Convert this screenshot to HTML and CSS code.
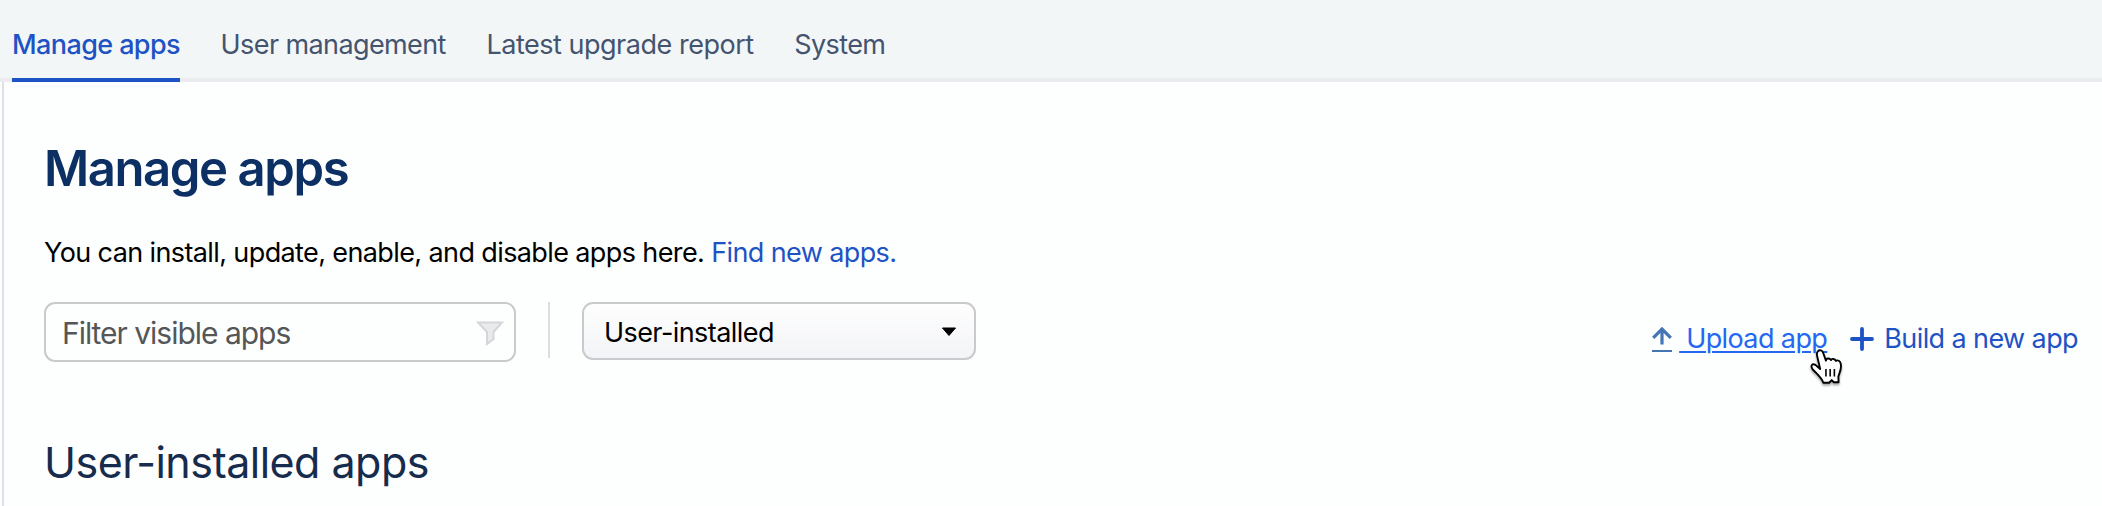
FILE: index.html
```html
<!DOCTYPE html>
<html lang="en">
<head>
<meta charset="utf-8">
<title>Manage apps</title>
<link rel="stylesheet" href="styles.css">
</head>
<body>
<nav class="tabs">
  <a class="tab tab-active">Manage apps</a>
  <a class="tab">User management</a>
  <a class="tab tab-report">Latest upgrade report</a>
  <a class="tab">System</a>
</nav>
<main class="panel">
  <h1 class="title">Manage apps</h1>
  <p class="intro">You can install, update, enable, and disable apps here. <a class="intro-link">Find new apps.</a></p>
  <div class="toolbar">
    <div class="filter">
      <span class="filter-text">Filter visible apps</span>
      <svg class="funnel" width="28" height="25" viewBox="0 0 28 25"><path d="M2 1.500H26L17.500 11V18L11 23V11Z" fill="#e9eaec" stroke="#d5d6d9" stroke-width="2"/></svg>
    </div>
    <div class="divider"></div>
    <div class="select">
      <span class="select-text">User-installed</span>
      <svg class="caret" width="16" height="10" viewBox="0 0 16 10"><path d="M1.500 1H14.500L8 8.500Z" fill="#000" stroke="#000" stroke-linejoin="round"/></svg>
    </div>
    <div class="actions">
      <a class="action upload">
        <svg class="upload-icon" width="20" height="25" viewBox="0 0 20 25"><path d="M10 17.500V3M1.200 10.800L10 2L18.800 10.800" fill="none" stroke="#4476b3" stroke-width="3.200"/><path d="M0 24H20" stroke="#4476b3" stroke-width="2"/></svg>
        <span class="upload-text">&nbsp;Upload app</span>
      </a>
      <a class="action build">
        <svg width="24" height="24" viewBox="0 0 24 24"><path d="M12 2V22M2 12H22" stroke="#1d53c4" stroke-width="3.800" stroke-linecap="round"/></svg>
        <span class="build-text">Build a new app</span>
      </a>
    </div>
  </div>
  <h2 class="subtitle">User-installed apps</h2>
</main>
<svg class="pointer" width="38" height="40" viewBox="0 0 36 38"><path d="M9.500 3C11 1.500 13.500 2.200 14.300 4.500L17 12C17 9.500 20.500 9.200 21.800 11.500C22.500 9.800 25.500 10 26.500 12.300C28 11 30.800 12.200 31 15C32.200 20 30 23 28.800 27L29 32.500H24.500L22.500 30.500L20 33H14.500C13 28 7.500 24 4.200 20C2 16.500 4 14.500 7 16L11.500 20L8.500 7C8 5 8.500 4 9.500 3Z" fill="#fff" stroke="#000" stroke-width="1.800" stroke-linejoin="round"/><path d="M17 20V27M21 20V27M25 20V27" stroke="#000" stroke-width="1.500"/></svg>
</body>
</html>
```
FILE: styles.css
```css
* { box-sizing: border-box; }
body {
  margin: 0;
  height: 506px;
  overflow: hidden;
  display: flex;
  flex-direction: column;
  background: #fdfefe;
  color: #000;
  font-family: Inter, "Liberation Sans", sans-serif;
  font-size: 27px;
}
.tabs {
  display: flex;
  gap: 40.6px;
  height: 82px;
  flex: none;
  padding-left: 12px;
  background: #f3f6f7;
  box-shadow: inset 0 -4px #ebecef;
}
.tab {
  height: 82px;
  line-height: 90px;
  color: #44546f;
  white-space: nowrap;
  letter-spacing: -0.6px;
}
.tab-active {
  color: #1d53c4;
  font-weight: 500;
  border-bottom: 4px solid #1d53c4;
}
.tab-report { letter-spacing: -0.48px; }
.panel {
  flex: 1;
  margin-left: 2px;
  padding: 0 24px 0 40px;
  border-left: 2px solid #dee0e7;
}
.title {
  margin: 0;
  padding-top: 57px;
  height: 141px;
  line-height: 60px;
  font-size: 49px;
  font-weight: 600;
  color: #0c3063;
  letter-spacing: -1.4px;
}
.intro {
  margin: 0;
  height: 79px;
  padding-top: 14px;
  line-height: 32px;
  white-space: nowrap;
  letter-spacing: -0.61px;
}
.intro-link { color: #1d53c4; }
.toolbar {
  display: flex;
  align-items: flex-start;
  height: 60px;
}
.filter {
  display: flex;
  flex: none;
  align-items: center;
  justify-content: space-between;
  width: 472px;
  height: 60px;
  padding: 0 10px 0 16px;
  border: 2px solid #c9cacb;
  border-radius: 11px;
}
.filter-text { padding-top: 2px; color: #555658; font-size: 30px; letter-spacing: -1.02px; line-height: 54px; }
.funnel { margin-top: 3px; }
.divider { flex: none; width: 2px; height: 56px; margin: 0 32px; background: #dcdddf; }
.select {
  display: flex;
  flex: none;
  align-items: center;
  justify-content: space-between;
  width: 394px;
  height: 58px;
  padding: 0 17px 0 20px;
  border: 2px solid #c9cacb;
  border-radius: 11px;
  background: linear-gradient(#fefefe, #f3f4f7);
}
.select-text { padding-top: 3px; letter-spacing: -0.57px; line-height: 51px; }
.caret { margin-top: 2px; }
.actions {
  display: flex;
  gap: 23px;
  margin-left: auto;
  padding-top: 20px;
}
.action {
  display: flex;
  align-items: center;
  height: 34px;
  line-height: 34px;
  white-space: nowrap;
  letter-spacing: -0.6px;
}
.upload { gap: 7px; color: #2468f2; }
.upload-text { text-decoration: underline; text-decoration-thickness: 2px; text-underline-offset: 3px; }
.build { gap: 10px; color: #1d53c4; }
.subtitle {
  margin: 74px 0 0;
  line-height: 52px;
  font-size: 43px;
  font-weight: 400;
  color: #172b4d;
  letter-spacing: -0.52px;
}
.pointer {
  position: absolute;
  left: 1808px;
  top: 348px;
  filter: drop-shadow(0 2px 1px rgba(0, 0, 0, 0.35));
}
```
